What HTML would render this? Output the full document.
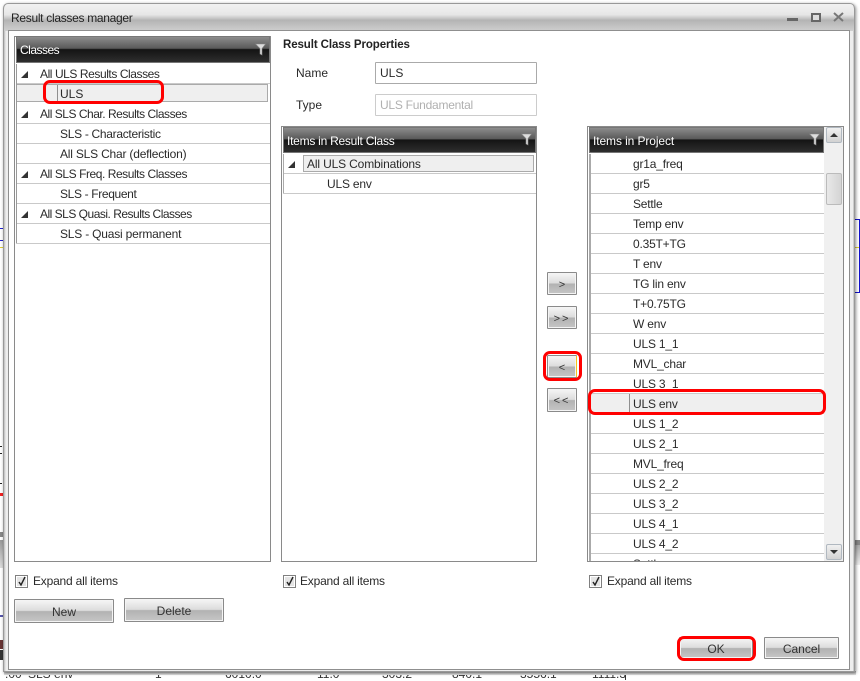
<!DOCTYPE html>
<html><head><meta charset="utf-8">
<style>
html,body{margin:0;padding:0}
body{width:860px;height:680px;overflow:hidden;position:relative;background:#fff;font-family:"Liberation Sans",sans-serif;font-size:12px;color:#2a2a2a}
div,span{position:absolute;box-sizing:border-box;white-space:nowrap}
.panel{background:#fff;border:1px solid #8a8a8a}
.hd{background:linear-gradient(#8c8c8c 0,#5a5a5a 45%,#141414 50%,#2e2e2e 100%);color:#fff;height:26px;line-height:26px;padding-left:3px;border:1px solid #777}
.row{height:20px;line-height:19px;border-bottom:1px solid #c9c9c9;background:#fff}
.sel{background:#efefef}
.t{top:1px;line-height:19px}
.it{letter-spacing:-.2px}
.sep{top:0;height:19px;width:1px;background:#8f8f8f}
.btn{border:1px solid #8a8a8a;background:linear-gradient(#f6f6f6 0,#dcdcdc 48%,#b2b2b2 52%,#c6c6c6 100%);text-align:center;color:#333;box-shadow:inset 0 0 0 1px #f4f4f4;border-radius:1px}
.red{border:3px solid #f00;border-radius:7px}
.cb{width:13px;height:13px;border:1px solid #808080;background:#e4e4e4;box-shadow:inset 0 0 0 1px #fff}
.lbl{line-height:14px;letter-spacing:-.2px}
.inp{border:1px solid #aaa;background:#fff;height:22px;line-height:21px;padding-left:4px;border-radius:1px}
.tri{width:0;height:0;border-style:solid;border-width:0 0 7px 7px;border-color:transparent transparent #333 transparent}
.bt{font-size:12px;line-height:14px;top:667px;color:#333}
</style></head><body>

<!-- background remnants -->
<div style="left:0;top:228px;width:3px;height:1px;background:#22c"></div>
<div style="left:0;top:240px;width:3px;height:1px;background:#22c"></div>
<div style="left:0;top:247px;width:3px;height:1px;background:#dc3"></div>
<div style="left:0;top:446px;width:2px;height:1px;background:#222"></div>
<div style="left:0;top:453px;width:2px;height:1px;background:#222"></div>
<div style="left:0;top:483px;width:2px;height:1px;background:#222"></div>
<div style="left:0;top:493px;width:3px;height:3px;background:#e22"></div>
<div style="left:0;top:532px;width:3px;height:5px;background:#888"></div>
<div style="left:0;top:540px;width:3px;height:28px;background:linear-gradient(#999,#ddd)"></div>
<div style="left:0;top:615px;width:3px;height:2px;background:#55a"></div>
<div style="left:0;top:640px;width:3px;height:9px;background:#633"></div>
<div style="left:0;top:650px;width:3px;height:10px;background:#333"></div>
<div style="left:855px;top:219px;width:5px;height:74px;border:1px solid #11c;border-left:0"></div>
<div style="left:855px;top:247px;width:4px;height:1px;background:#dc3"></div>
<div style="left:855px;top:540px;width:5px;height:5px;background:#888"></div>
<div style="left:855px;top:545px;width:5px;height:20px;background:linear-gradient(#aaa,#eee)"></div>
<div class="bt" style="left:5px">.00</div>
<div class="bt" style="left:28px">SLS env</div>
<div class="bt" style="left:155px">1</div>
<div class="bt" style="left:225px">6010.0</div>
<div class="bt" style="left:317px">11.0</div>
<div class="bt" style="left:382px">303.2</div>
<div class="bt" style="left:452px">840.1</div>
<div class="bt" style="left:520px">3556.1</div>
<div class="bt" style="left:592px">1111.3</div>
<div style="left:625px;top:670px;width:1px;height:10px;background:#333"></div>

<!-- window -->
<div style="left:4px;top:671px;width:852px;height:4px;background:linear-gradient(#aaa,#e4e4e4)"></div>
<div style="left:3px;top:3px;width:852px;height:669px;background:linear-gradient(90deg,#bbb,#eee 2px,#eee 849px,#aaa);border:1px solid #999;border-radius:5px 5px 0 0;box-shadow:1px 1px 3px rgba(0,0,0,.45)"></div>
<div style="left:4px;top:4px;width:850px;height:27px;background:linear-gradient(#f2f2f2 0,#e6e6e6 40%,#b4b4b4 60%,#cfcfcf 100%);border-radius:5px 5px 0 0"></div>
<div style="left:11px;top:11px;line-height:14px;font-size:12px;letter-spacing:-.3px;color:#222">Result classes manager</div>
<div style="left:787px;top:18px;width:11px;height:3px;background:#666"></div>
<div style="left:811px;top:13px;width:10px;height:9px;border:2px solid #666;background:#ddd"></div>
<svg style="position:absolute;left:833px;top:12px" width="12" height="10"><path d="M1 1L10 9M10 1L1 9" stroke="#777" stroke-width="2"/></svg>
<div style="left:8px;top:30px;width:842px;height:640px;background:#fff;border:1px solid #8f8f8f"></div>

<!-- Classes -->
<div class="panel" style="left:14px;top:36px;width:257px;height:526px"></div>
<div class="hd" style="left:16px;top:36px;width:254px;height:27px;line-height:27px;letter-spacing:-.5px">Classes</div>
<svg style="position:absolute;left:255px;top:43px" width="11" height="13"><path d="M.5 1H10.5L7 5.5V12L5 11V5.5Z" fill="#ddd" stroke="#888" stroke-width=".6"/></svg>
<div class="row" style="left:16px;top:64px;width:254px"><div class="tri" style="left:5px;top:7px"></div><span class="t" style="left:24px;letter-spacing:-.43px">All ULS Results Classes</span></div>
<div class="row sel" style="left:16px;top:84px;width:252px;height:18px;border:1px solid #aaa"><span class="sep" style="left:40px;height:17px"></span><span class="t" style="left:43px;top:0">ULS</span></div>
<div class="row" style="left:16px;top:104px;width:254px"><div class="tri" style="left:5px;top:7px"></div><span class="t" style="left:24px;letter-spacing:-.48px">All SLS Char. Results Classes</span></div>
<div class="row" style="left:16px;top:124px;width:254px"><span class="t" style="left:44px;letter-spacing:-.3px">SLS - Characteristic</span></div>
<div class="row" style="left:16px;top:144px;width:254px"><span class="t" style="left:44px;letter-spacing:-.2px">All SLS Char (deflection)</span></div>
<div class="row" style="left:16px;top:164px;width:254px"><div class="tri" style="left:5px;top:7px"></div><span class="t" style="left:24px;letter-spacing:-.45px">All SLS Freq. Results Classes</span></div>
<div class="row" style="left:16px;top:184px;width:254px"><span class="t" style="left:44px;letter-spacing:-.35px">SLS - Frequent</span></div>
<div class="row" style="left:16px;top:204px;width:254px"><div class="tri" style="left:5px;top:7px"></div><span class="t" style="left:24px;letter-spacing:-.5px">All SLS Quasi. Results Classes</span></div>
<div class="row" style="left:16px;top:224px;width:254px"><span class="t" style="left:44px;letter-spacing:-.2px">SLS - Quasi permanent</span></div>
<div style="left:16px;top:64px;width:1px;height:179px;background:#999"></div>
<div class="red" style="left:43px;top:80px;width:121px;height:24px"></div>

<!-- Properties -->
<div style="left:283px;top:38px;font-weight:bold;line-height:14px;font-size:11.5px;letter-spacing:-.1px;color:#222">Result Class Properties</div>
<div style="left:296px;top:66px;line-height:14px">Name</div>
<div class="inp" style="left:375px;top:62px;width:162px">ULS</div>
<div style="left:296px;top:98px;line-height:14px">Type</div>
<div class="inp" style="left:375px;top:94px;width:162px;color:#b0b0b0;border-color:#ccc;letter-spacing:-.25px">ULS Fundamental</div>

<!-- Items in Result Class -->
<div class="panel" style="left:281px;top:126px;width:256px;height:436px"></div>
<div class="hd" style="left:283px;top:127px;width:253px;letter-spacing:-.25px">Items in Result Class</div>
<svg style="position:absolute;left:521px;top:133px" width="11" height="13"><path d="M.5 1H10.5L7 5.5V12L5 11V5.5Z" fill="#ddd" stroke="#888" stroke-width=".6"/></svg>
<div class="row" style="left:283px;top:154px;width:253px"><div class="tri" style="left:5px;top:7px"></div><div class="sel" style="left:20px;top:1px;width:231px;height:17px;border:1px solid #aaa"></div><span class="t" style="left:24px;letter-spacing:-.15px">All ULS Combinations</span></div>
<div class="row" style="left:283px;top:174px;width:253px"><span class="t it" style="left:44px">ULS env</span></div>
<div style="left:283px;top:154px;width:1px;height:39px;background:#aaa"></div>

<!-- Move buttons -->
<div class="btn" style="left:547px;top:272px;width:30px;height:23px;line-height:24px;font-size:11px">&gt;</div>
<div class="btn" style="left:547px;top:306px;width:30px;height:23px;line-height:24px;font-size:11px;letter-spacing:2px">&gt;&gt;</div>
<div class="btn" style="left:547px;top:355px;width:30px;height:23px;line-height:24px;font-size:11px">&lt;</div>
<div style="left:576px;top:356px;width:1px;height:21px;background:#f5c518"></div>
<div class="red" style="left:543px;top:351px;width:39px;height:30px"></div>
<div class="btn" style="left:547px;top:388px;width:30px;height:24px;line-height:25px;font-size:11px;letter-spacing:2px">&lt;&lt;</div>

<!-- Items in Project -->
<div class="panel" style="left:587px;top:126px;width:257px;height:436px;overflow:hidden">
<div class="row" style="left:2px;top:27px;width:234px"><span class="t it" style="left:43px">gr1a_freq</span></div>
<div class="row" style="left:2px;top:47px;width:234px"><span class="t it" style="left:43px">gr5</span></div>
<div class="row" style="left:2px;top:67px;width:234px"><span class="t it" style="left:43px">Settle</span></div>
<div class="row" style="left:2px;top:87px;width:234px"><span class="t it" style="left:43px">Temp env</span></div>
<div class="row" style="left:2px;top:107px;width:234px"><span class="t it" style="left:43px">0.35T+TG</span></div>
<div class="row" style="left:2px;top:127px;width:234px"><span class="t it" style="left:43px">T env</span></div>
<div class="row" style="left:2px;top:147px;width:234px"><span class="t it" style="left:43px">TG lin env</span></div>
<div class="row" style="left:2px;top:167px;width:234px"><span class="t it" style="left:43px">T+0.75TG</span></div>
<div class="row" style="left:2px;top:187px;width:234px"><span class="t it" style="left:43px">W env</span></div>
<div class="row" style="left:2px;top:207px;width:234px"><span class="t it" style="left:43px">ULS 1_1</span></div>
<div class="row" style="left:2px;top:227px;width:234px"><span class="t it" style="left:43px">MVL_char</span></div>
<div class="row" style="left:2px;top:247px;width:234px"><span class="t it" style="left:43px">ULS 3_1</span></div>
<div class="row sel" style="left:2px;top:267px;width:234px"><span class="sep" style="left:39px"></span><span class="t it" style="left:43px">ULS env</span></div>
<div class="row" style="left:2px;top:287px;width:234px"><span class="t it" style="left:43px">ULS 1_2</span></div>
<div class="row" style="left:2px;top:307px;width:234px"><span class="t it" style="left:43px">ULS 2_1</span></div>
<div class="row" style="left:2px;top:327px;width:234px"><span class="t it" style="left:43px">MVL_freq</span></div>
<div class="row" style="left:2px;top:347px;width:234px"><span class="t it" style="left:43px">ULS 2_2</span></div>
<div class="row" style="left:2px;top:367px;width:234px"><span class="t it" style="left:43px">ULS 3_2</span></div>
<div class="row" style="left:2px;top:387px;width:234px"><span class="t it" style="left:43px">ULS 4_1</span></div>
<div class="row" style="left:2px;top:407px;width:234px"><span class="t it" style="left:43px">ULS 4_2</span></div>
<div class="row" style="left:2px;top:427px;width:234px"><span class="t it" style="left:43px">Settle</span></div>
<div style="left:1px;top:27px;width:2px;height:408px;background:#aaa"></div>
</div>
<div class="hd" style="left:589px;top:127px;width:235px;letter-spacing:-.1px">Items in Project</div>
<svg style="position:absolute;left:809px;top:133px" width="11" height="13"><path d="M.5 1H10.5L7 5.5V12L5 11V5.5Z" fill="#ddd" stroke="#888" stroke-width=".6"/></svg>
<div style="left:824px;top:127px;width:19px;height:434px;background:#f0f0f0"></div>
<div style="left:826px;top:127px;width:16px;height:16px;background:linear-gradient(#f0f0f0,#d2d2d2);border:1px solid #b0b8c0;border-radius:2px"></div>
<div style="left:830px;top:133px;width:0;height:0;border:4px solid transparent;border-top:0;border-bottom:4px solid #333"></div>
<div style="left:826px;top:173px;width:16px;height:32px;background:linear-gradient(90deg,#e8e8e8,#d4d4d4);border:1px solid #bbb;border-radius:2px"></div>
<div style="left:826px;top:544px;width:16px;height:16px;background:linear-gradient(#f0f0f0,#d2d2d2);border:1px solid #b0b8c0;border-radius:2px"></div>
<div style="left:830px;top:550px;width:0;height:0;border:4px solid transparent;border-bottom:0;border-top:4px solid #333"></div>
<div class="red" style="left:588px;top:389px;width:238px;height:26px"></div>

<!-- Checkboxes -->
<div class="cb" style="left:15px;top:575px"></div>
<svg style="position:absolute;left:16px;top:575px" width="12" height="12"><path d="M3 7L5 10L9 2" stroke="#222" stroke-width="1.4" fill="none"/></svg>
<div class="lbl" style="left:33px;top:574px">Expand all items</div>
<div class="cb" style="left:283px;top:575px"></div>
<svg style="position:absolute;left:284px;top:575px" width="12" height="12"><path d="M3 7L5 10L9 2" stroke="#222" stroke-width="1.4" fill="none"/></svg>
<div class="lbl" style="left:300px;top:574px">Expand all items</div>
<div class="cb" style="left:589px;top:575px"></div>
<svg style="position:absolute;left:590px;top:575px" width="12" height="12"><path d="M3 7L5 10L9 2" stroke="#222" stroke-width="1.4" fill="none"/></svg>
<div class="lbl" style="left:607px;top:574px">Expand all items</div>

<!-- Bottom buttons -->
<div class="btn" style="left:14px;top:599px;width:100px;height:24px;line-height:25px">New</div>
<div class="btn" style="left:124px;top:598px;width:100px;height:24px;line-height:25px">Delete</div>
<div class="btn" style="left:679px;top:637px;width:74px;height:22px;line-height:23px">OK</div>
<div class="red" style="left:677px;top:636px;width:79px;height:25px"></div>
<div class="btn" style="left:764px;top:637px;width:75px;height:22px;line-height:23px">Cancel</div>

</body></html>
